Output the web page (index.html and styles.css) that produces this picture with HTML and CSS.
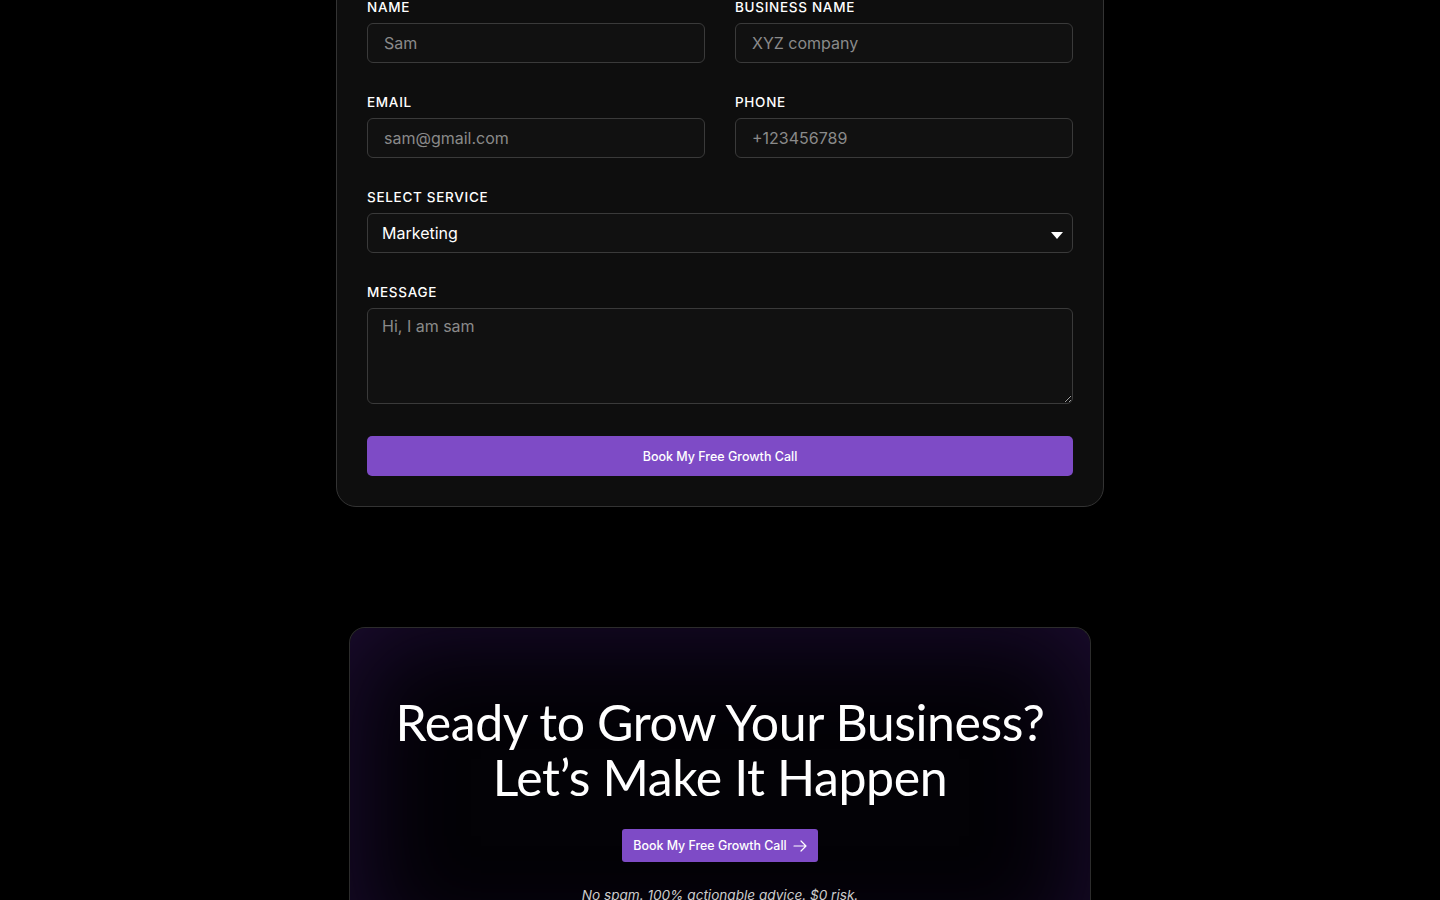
FILE: index.html
```html
<!DOCTYPE html>
<html lang="en">
<head>
<meta charset="utf-8">
<title>Book a call</title>
<link rel="stylesheet" href="styles.css">
</head>
<body>
<main class="page">
  <form class="form-card">
    <div class="row two">
      <div class="field">
        <label class="label">Name</label>
        <input class="input" type="text" placeholder="Sam">
      </div>
      <div class="field">
        <label class="label">Business Name</label>
        <input class="input" type="text" placeholder="XYZ company">
      </div>
    </div>
    <div class="row two">
      <div class="field">
        <label class="label">Email</label>
        <input class="input" type="email" placeholder="sam@gmail.com">
      </div>
      <div class="field">
        <label class="label">Phone</label>
        <input class="input" type="tel" placeholder="+123456789">
      </div>
    </div>
    <div class="row">
      <div class="field">
        <label class="label">Select Service</label>
        <div class="select-wrap">
          <select class="input select">
            <option>Marketing</option>
            <option>Design</option>
            <option>Development</option>
          </select>
          <svg class="caret" width="12" height="7" viewBox="0 0 12 7"><path d="M0 0h12L6 7z" fill="#fff"/></svg>
        </div>
      </div>
    </div>
    <div class="row">
      <div class="field">
        <label class="label">Message</label>
        <textarea class="input textarea" placeholder="Hi, I am sam"></textarea>
      </div>
    </div>
    <button class="submit" type="button">Book My Free Growth Call</button>
  </form>

  <section class="cta">
    <h2 class="cta-title">Ready to Grow Your Business?<br>Let’s Make It Happen</h2>
    <a class="cta-btn" href="#">Book My Free Growth Call
      <svg width="14" height="12" viewBox="0 0 14 12" fill="none" stroke="#fff" stroke-width="1.2" stroke-linecap="round" stroke-linejoin="round"><path d="M1 6h12M8 1l5 5-5 5"/></svg>
    </a>
    <p class="cta-note">No spam. 100% actionable advice. $0 risk.</p>
  </section>
</main>
</body>
</html>
```

FILE: styles.css
```css
* { box-sizing: border-box; }
html, body { margin: 0; padding: 0; background: #000; }
body {
  font-family: "Inter", "DejaVu Sans", sans-serif;
  color: #fff;
  overflow: hidden;
}
.page {
  display: flex;
  flex-direction: column;
  align-items: center;
}
.form-card {
  width: 768px;
  margin-top: -33px;
  padding: 30px;
  background: #0e0e0e;
  border: 1px solid #333;
  border-radius: 20px;
  display: flex;
  flex-direction: column;
}
.row {
  display: grid;
  grid-template-columns: 1fr;
  gap: 30px;
  margin-bottom: 30px;
}
.row.two { grid-template-columns: 1fr 1fr; }
.row:nth-child(4) { margin-bottom: 32px; }
.field { display: flex; flex-direction: column; }
.label {
  font-size: 13.5px;
  line-height: 18px;
  letter-spacing: 0.7px;
  text-transform: uppercase;
  font-weight: 500;
  color: #fff;
  margin-bottom: 7px;
}
.input {
  height: 40px;
  width: 100%;
  background: #111;
  border: 1px solid #3a3a3a;
  border-radius: 6px;
  color: #fff;
  font-family: inherit;
  font-size: 16px;
  padding: 0 16px;
  outline: none;
}
.input::placeholder { color: #8a8a8a; }
.select-wrap { position: relative; }
.select {
  appearance: none;
  -webkit-appearance: none;
  padding-left: 14px;
}
.caret {
  position: absolute;
  right: 10px;
  top: 19px;
}
.textarea {
  height: 96px;
  padding: 7px 14px;
  resize: vertical;
  display: block;
}
.submit {
  height: 40px;
  border: none;
  border-radius: 5px;
  background: #7e4bc6;
  color: #fff;
  font-family: inherit;
  font-size: 12.5px;
  font-weight: 500;
  cursor: pointer;
}
.cta {
  width: 742px;
  margin-top: 120px;
  padding: 67px 20px 0;
  height: 340px;
  border: 1px solid #2c2c2c;
  border-bottom: none;
  border-radius: 16px 16px 0 0;
  background: #030206;
  box-shadow: inset 0 0 110px rgba(80, 35, 140, 0.35);
  display: flex;
  flex-direction: column;
  align-items: center;
}
.cta-title {
  margin: 0;
  font-family: "Lato", "Inter", sans-serif;
  font-weight: 400;
  font-size: 50px;
  line-height: 55px;
  text-align: center;
  letter-spacing: -0.4px;
}
.cta-btn {
  margin-top: 24px;
  height: 33px;
  padding: 0 11px;
  display: inline-flex;
  align-items: center;
  gap: 6px;
  background: #7e4bc6;
  border-radius: 3px;
  color: #fff;
  text-decoration: none;
  font-size: 12.4px;
  font-weight: 500;
}
.cta-note {
  margin: 25px 0 0;
  font-size: 13.6px;
  font-style: italic;
  color: #ccc;
}
```
